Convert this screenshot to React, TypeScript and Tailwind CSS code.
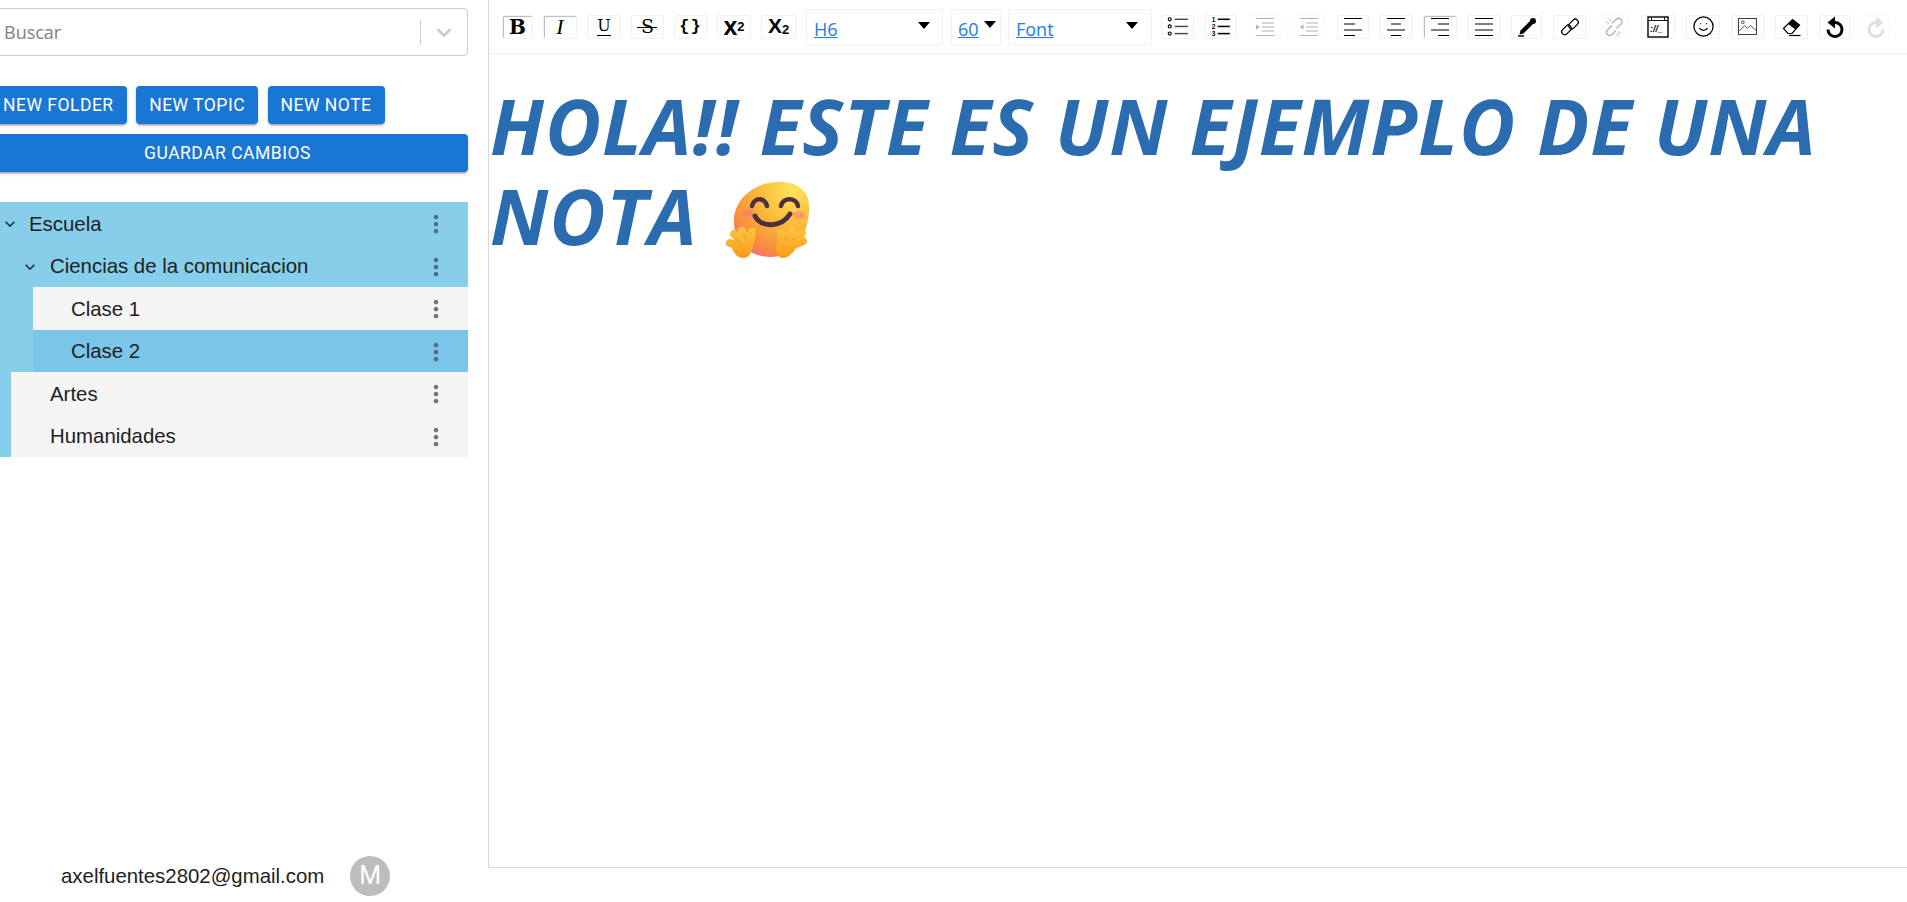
import type { ReactNode } from 'react';
import { Smile } from 'lucide-react';

const MoreVert = ({ muted }: { muted?: boolean }) => (
  <svg viewBox="0 0 24 24" className={`h-7 w-7 ${muted ? 'fill-[#757575]' : 'fill-[#4f6f80]'}`}>
    <path d="M12 8c1.1 0 2-.9 2-2s-.9-2-2-2-2 .9-2 2 .9 2 2 2zm0 2c-1.1 0-2 .9-2 2s.9 2 2 2 2-.9 2-2-.9-2-2-2zm0 6c-1.1 0-2 .9-2 2s.9 2 2 2 2-.9 2-2-.9-2-2-2z" />
  </svg>
);

const Chevron = () => (
  <svg viewBox="0 0 24 24" className="h-5 w-5 shrink-0 fill-[#263238]">
    <path d="M16.59 8.59 12 13.17 7.41 8.59 6 10l6 6 6-6z" />
  </svg>
);

function TreeRow({ label, className, textClass, open, muted }: { label: string; className: string; textClass: string; open?: boolean; muted?: boolean }) {
  return (
    <div className={`flex h-[42.5px] items-center pt-[2px] pr-[18px] ${className}`}>
      {open && <Chevron />}
      <span className={`flex-1 text-[20.4px] text-[#212121] ${textClass}`}>{label}</span>
      <MoreVert muted={muted} />
    </div>
  );
}

const lines = (rows: [number, number, number][], stroke = '#000', width = 1) =>
  rows.map(([x1, x2, y]) => <line key={y} x1={x1} x2={x2} y1={y} y2={y} stroke={stroke} strokeWidth={width} />);

const Svg = ({ children, className = 'h-5 w-5' }: { children: ReactNode; className?: string }) => (
  <svg viewBox="0 0 20 20" className={className} fill="none">
    {children}
  </svg>
);

const UlIcon = () => (
  <Svg className="h-[22px] w-[22px]">
    {[3, 9.5, 16].map((y) => (
      <circle key={y} cx="2.5" cy={y} r="1.4" stroke="#000" strokeWidth="1" />
    ))}
    {lines([[7, 19, 3], [7, 19, 9.5], [7, 19, 16]], '#444', 1.3)}
  </Svg>
);

const OlIcon = () => (
  <Svg className="h-[22px] w-[22px]">
    {['1', '2', '3'].map((n, i) => (
      <text key={n} x="1.5" y={5 + i * 6.5} fontSize="6" fontWeight="700" fontFamily="Liberation Sans, sans-serif" fill="#000">
        {n}
      </text>
    ))}
    {lines([[7, 18, 3], [7, 18, 9.5], [7, 18, 16]], '#000', 1.4)}
  </Svg>
);

const IndentIcon = () => (
  <Svg>
    {lines([[1, 19, 1.5], [7, 19, 6], [7, 19, 10], [7, 19, 14], [1, 19, 18.5]], '#000', 1)}
    <path d="M1 7.5 4.5 10 1 12.5z" fill="#000" />
  </Svg>
);

const OutdentIcon = () => (
  <Svg>
    {lines([[1, 19, 1.5], [7, 19, 6], [7, 19, 10], [7, 19, 14], [1, 19, 18.5]], '#000', 1)}
    <path d="M4.5 7.5 1 10l3.5 2.5z" fill="#000" />
  </Svg>
);

const AlignIcon = ({ rows }: { rows: [number, number, number][] }) => <Svg>{lines(rows, '#000', 1)}</Svg>;

const PenIcon = () => (
  <Svg>
    <path d="M2.500 17.500 3.500 13.500 13.500 3.500l3 3L6.500 16.500z" fill="#000" />
    <circle cx="16" cy="4" r="3" fill="#000" />
    <path d="M1 19h6" stroke="#000" strokeWidth="1.400" />
  </Svg>
);

const ChainIcon = () => (
  <Svg>
    <rect x="1" y="10" width="11" height="6" rx="3" transform="rotate(-45 6.500 13)" stroke="#000" strokeWidth="1.300" />
    <rect x="8" y="4" width="11" height="6" rx="3" transform="rotate(-45 13.500 7)" stroke="#000" strokeWidth="1.300" />
  </Svg>
);

const BrokenChainIcon = () => (
  <Svg>
    <path d="M8 8.500 3.500 13a3 3 0 0 0 4.500 4.500l4-4" stroke="#000" strokeWidth="1.300" />
    <path d="M8 6.500 12 2.500A3 3 0 0 1 17 7l-4.500 4.500" stroke="#000" strokeWidth="1.300" />
    <path d="M2 5 5 6.500M5.500 1.500 6.500 4.500M14 15l3 1.500M13 16.500l1 3" stroke="#000" strokeWidth="0.900" />
  </Svg>
);

const EmbedIcon = () => (
  <svg viewBox="0 0 22 22" className="h-[22px] w-[22px]" fill="none">
    <rect x="1" y="1" width="20" height="20" stroke="#000" strokeWidth="1.400" />
    <path d="M1 4.500h20M4.500 1v3.500M17.500 1v3.500" stroke="#000" strokeWidth="0.900" />
    <text x="3" y="16" fontSize="9" fontWeight="700" fontStyle="italic" fontFamily="Liberation Sans, sans-serif" fill="#000">
      ://_
    </text>
  </svg>
);

const ImageIcon = () => (
  <svg viewBox="0 0 20 18" className="h-[17px] w-[19px]" fill="none">
    <rect x="0.500" y="0.500" width="19" height="17" stroke="#333" strokeWidth="1" />
    <circle cx="5" cy="4.500" r="1.500" stroke="#333" strokeWidth="0.900" />
    <path d="M1 14l6-6 3 3 3-3 6 5" stroke="#333" strokeWidth="0.900" />
  </svg>
);

const EraserIcon = () => (
  <Svg>
    <path d="M1.500 11.500 10.500 2.500l7 5.500-7.500 8.500H6z" stroke="#000" strokeWidth="1.200" fill="#fff" />
    <path d="M6 7 10.500 2.500l7 5.500-4 4.500z" fill="#000" />
    <path d="M7 18.500h11.500" stroke="#000" strokeWidth="1.200" />
  </Svg>
);

const UndoIcon = ({ flip }: { flip?: boolean }) => (
  <svg viewBox="0 0 20 22" className={`h-[22px] w-5 ${flip ? '-scale-x-100' : ''}`} fill="none">
    <path d="M7 6.500h3a7 7 0 1 1-7 7" stroke={flip ? '#999' : '#000'} strokeWidth="3" />
    <path d="M10 .500v12L2.500 6.500z" fill={flip ? '#999' : '#000'} />
  </svg>
);

const TextIcon = ({ children, className }: { children: ReactNode; className: string }) => <span className={`leading-none text-black ${className}`}>{children}</span>;

type Tool = { width: string; icon: ReactNode; active?: boolean; disabled?: boolean };

const formatTools: Tool[] = [
  { width: 'w-[31px]', active: true, icon: <TextIcon className="font-['DejaVu_Serif'] text-[20px] font-bold">B</TextIcon> },
  { width: 'w-[34px]', active: true, icon: <TextIcon className="font-['Liberation_Serif'] text-[22px] italic">I</TextIcon> },
  { width: 'w-[34px]', icon: <TextIcon className="border-b-[1.5px] border-black pb-px font-['DejaVu_Serif'] text-[16px]">U</TextIcon> },
  {
    width: 'w-[33px]',
    icon: (
      <TextIcon className="relative font-['DejaVu_Serif'] text-[19px]">
        S<span className="absolute top-[10px] -left-[4px] h-px w-5 bg-black" />
      </TextIcon>
    ),
  },
  { width: 'w-[33px]', icon: <TextIcon className="font-['Liberation_Mono'] text-[17px] font-bold tracking-[1px] text-[#444]">{'{}'}</TextIcon> },
  {
    width: 'w-[34px]',
    icon: (
      <TextIcon className="font-['Liberation_Sans'] text-[25px] font-bold">
        x<sup className="-top-[4px] text-[13px]">2</sup>
      </TextIcon>
    ),
  },
  {
    width: 'w-[35px]',
    icon: (
      <TextIcon className="-mt-[2px] font-['Liberation_Sans'] text-[21px] font-bold">
        X<sub className="-bottom-[1px] text-[13px]">2</sub>
      </TextIcon>
    ),
  },
];

const blockTools: Tool[] = [
  { width: 'w-[33px]', icon: <UlIcon /> },
  { width: 'w-[32px]', icon: <OlIcon /> },
  { width: 'w-[33px]', disabled: true, icon: <IndentIcon /> },
  { width: 'w-[34px]', disabled: true, icon: <OutdentIcon /> },
  { width: 'w-[32px]', icon: <AlignIcon rows={[[1, 19, 1.5], [1, 12, 7], [1, 19, 13], [1, 12, 18.5]]} /> },
  { width: 'w-[32px]', icon: <AlignIcon rows={[[1, 19, 1.5], [5, 15, 7], [1, 19, 13], [5, 15, 18.5]]} /> },
  { width: 'w-[34px]', active: true, icon: <AlignIcon rows={[[1, 19, 1.5], [8, 19, 7], [1, 19, 13], [8, 19, 18.5]]} /> },
  { width: 'w-[32px]', icon: <AlignIcon rows={[[1, 19, 1.5], [1, 19, 7], [1, 19, 13], [1, 19, 18.5]]} /> },
  { width: 'w-[31px]', icon: <PenIcon /> },
  { width: 'w-[33px]', icon: <ChainIcon /> },
  { width: 'w-[33px]', disabled: true, icon: <BrokenChainIcon /> },
  { width: 'w-[34px]', icon: <EmbedIcon /> },
  { width: 'w-[34px]', icon: <Smile size={23} strokeWidth={1.3} color="#000" /> },
  { width: 'w-[33px]', icon: <ImageIcon /> },
  { width: 'w-[33px]', icon: <EraserIcon /> },
  { width: 'w-[31px]', icon: <UndoIcon /> },
  { width: 'w-[29px]', disabled: true, icon: <UndoIcon flip /> },
];

function ToolButton({ tool }: { tool: Tool }) {
  return (
    <div
      className={`flex h-6 shrink-0 items-center justify-center rounded-[2px] border border-[#f1f1f1] bg-white ${tool.width} ${
        tool.active ? 'shadow-[inset_1px_1px_0_#bfbdbd]' : ''
      } ${tool.disabled ? 'opacity-30' : ''}`}
    >
      {tool.icon}
    </div>
  );
}

function Dropdown({ label, className, labelClass, caretClass }: { label: string; className: string; labelClass: string; caretClass: string }) {
  return (
    <div className={`relative h-9 shrink-0 rounded-[2px] border border-[#f1f1f1] bg-white ${className}`}>
      <span className={`absolute top-[7px] text-[18px] leading-[24px] text-[#1a7cf0] underline ${labelClass}`}>{label}</span>
      <span className={`absolute h-0 w-0 border-x-[6px] border-t-[7px] border-x-transparent border-t-black ${caretClass}`} />
    </div>
  );
}

function HugEmoji() {
  const fingers = 'stroke-[url(#hug-hand)]';
  return (
    <svg viewBox="0 8 100 76" className="inline-block h-[76px] w-[100px] align-[-13px]" fill="none" strokeLinecap="round">
      <defs>
        <radialGradient id="hug-face" cx="0.78" cy="0.12" r="1.05">
          <stop offset="0" stopColor="#ffe45c" />
          <stop offset="0.45" stopColor="#fcb83a" />
          <stop offset="0.8" stopColor="#f78a3e" />
          <stop offset="1" stopColor="#f2688f" />
        </radialGradient>
        <linearGradient id="hug-hand" gradientUnits="userSpaceOnUse" x1="0" y1="52" x2="0" y2="84">
          <stop offset="0" stopColor="#ffc83d" />
          <stop offset="1" stopColor="#f79a1e" />
        </linearGradient>
      </defs>
      <path d="M15 45C16 25 35 8 60 8c20 0 32 10 30 30-2 22-12 44-38 45-22 0-38-15-37-38z" fill="url(#hug-face)" />
      <ellipse cx="29" cy="39" rx="6" ry="4" fill="#f7727a" opacity="0.5" />
      <ellipse cx="80" cy="41" rx="6" ry="4" fill="#f7727a" opacity="0.5" />
      <path d="M33 32c2-9 13-9 15 0M62 32c2-9 15-9 17 0" stroke="#4d2f3f" strokeWidth="4.500" />
      <path d="M36 42c6 12 26 12 35-2" stroke="#4d2f3f" strokeWidth="5" />

      <path d="M11 69 22 72M15 60 25 70M23 57 29 70M33 58 30 72" className={fingers} strokeWidth="8" />
      <path d="M12 70c3-3 14-5 21-2 1 9-2 16-9 16-6 0-11-6-12-14z" fill="url(#hug-hand)" />
      <path d="M16 64 21 68M25 61 27 66" stroke="#ec8f1c" strokeWidth="0.800" />

      <path d="M84 67 70 73M83 59 68 70M73 57 64 70M62 59 62 72" className={fingers} strokeWidth="8" />
      <path d="M58 70c5-4 15-4 21-1-2 8-10 15-15 15-6 0-8-7-6-14z" fill="url(#hug-hand)" />
      <path d="M78 63 72 67M68 61 66 66" stroke="#ec8f1c" strokeWidth="0.800" />
    </svg>
  );
}

export default function App() {
  return (
    <div className="flex h-[902px] w-[1907px] overflow-hidden bg-white font-['Liberation_Sans',sans-serif]">
      <aside className="flex w-[488px] shrink-0 flex-col overflow-hidden">
        <div className="-ml-[13px] flex w-[481px] flex-1 flex-col">
          <div className="mt-2 flex h-[48px] items-center rounded-[4px] border border-[#cccccc]">
            <span className="flex-1 pl-4 font-['Open_Sans',sans-serif] text-[18px] text-[#808080]">Buscar</span>
            <span className="h-[25px] w-[1.5px] bg-[#cccccc]" />
            <svg viewBox="0 0 20 20" className="mx-[11px] h-6 w-6 fill-[#cccccc]">
              <path d="M4.516 7.548c.436-.446 1.043-.481 1.576 0L10 11.295l3.908-3.747c.533-.481 1.141-.446 1.574 0 .436.445.408 1.197 0 1.615-.406.418-4.695 4.502-4.695 4.502a1.095 1.095 0 0 1-1.576 0S4.924 9.581 4.516 9.163c-.409-.418-.436-1.170 0-1.615z" />
            </svg>
          </div>

          <div className="mt-[30px] flex gap-[9.5px] pl-[3px]">
            {['NEW FOLDER', 'NEW TOPIC', 'NEW NOTE'].map((label) => (
              <button key={label} className="h-[38px] rounded-[4px] bg-[#1976d2] px-[13px] font-['Roboto',sans-serif] text-[17.5px] tracking-[0.5px] text-white shadow-[0_3px_1px_-2px_rgba(0,0,0,0.2),0_2px_2px_0_rgba(0,0,0,0.14),0_1px_5px_0_rgba(0,0,0,0.12)]">
                {label}
              </button>
            ))}
          </div>
          <button className="mt-[10px] h-[38px] w-full rounded-[4px] bg-[#1976d2] font-['Roboto',sans-serif] text-[17.5px] tracking-[0.5px] text-white shadow-[0_3px_1px_-2px_rgba(0,0,0,0.2),0_2px_2px_0_rgba(0,0,0,0.14),0_1px_5px_0_rgba(0,0,0,0.12)]">
            GUARDAR CAMBIOS
          </button>

          <div className="mt-[30px] bg-[#87ceeb] pl-[13px]">
            <TreeRow label="Escuela" open className="pl-0" textClass="pl-[9px]" />
            <div className="pl-[11px]">
              <TreeRow label="Ciencias de la comunicacion" open className="pl-[9px]" textClass="pl-[10px]" />
              <div className="pl-[22px]">
                <TreeRow label="Clase 1" muted className="bg-[#f5f5f5]" textClass="pl-[38px]" />
                <TreeRow label="Clase 2" className="bg-[#7bc6e8]" textClass="pl-[38px]" />
              </div>
              <TreeRow label="Artes" muted className="bg-[#f5f5f5]" textClass="pl-[39px]" />
              <TreeRow label="Humanidades" muted className="bg-[#f5f5f5]" textClass="pl-[39px]" />
            </div>
          </div>

          <div className="mt-auto mb-[6px] flex items-center gap-[26px] pl-[74px]">
            <span className="text-[20.4px] text-[#212121]">axelfuentes2802@gmail.com</span>
            <div className="flex h-10 w-10 items-center justify-center rounded-full bg-[#bdbdbd] font-['Roboto',sans-serif] text-[25px] text-white">M</div>
          </div>
        </div>
      </aside>

      <main className="h-[868px] flex-1 border-b border-l border-[#d9d9d9]">
        <div className="flex h-[54px] items-center gap-[10px] border-b border-[#f1f1f1] pl-[13px] font-['Open_Sans',sans-serif]">
          {formatTools.map((tool, i) => (
            <ToolButton key={i} tool={tool} />
          ))}
          <Dropdown label="H6" className="w-[137px]" labelClass="left-[7px]" caretClass="left-[111px] top-[12px]" />
          <Dropdown label="60" className="-ml-[2px] w-[50px]" labelClass="left-[6px]" caretClass="left-[32px] top-[11px]" />
          <Dropdown label="Font" className="-ml-[3px] w-[144px]" labelClass="left-[7px]" caretClass="left-[117px] top-[12px]" />
          <div className="-ml-px flex items-center gap-[11px]">
            {blockTools.map((tool, i) => (
              <ToolButton key={i} tool={tool} />
            ))}
          </div>
        </div>
        <h1 className="mt-[27px] pl-[1px] font-['Open_Sans',sans-serif] text-[77px] leading-[90px] font-bold tracking-[1px] text-[#2b6cb0] italic">
          HOLA!! ESTE ES UN EJEMPLO DE UNA NOTA <HugEmoji />
        </h1>
      </main>
    </div>
  );
}
